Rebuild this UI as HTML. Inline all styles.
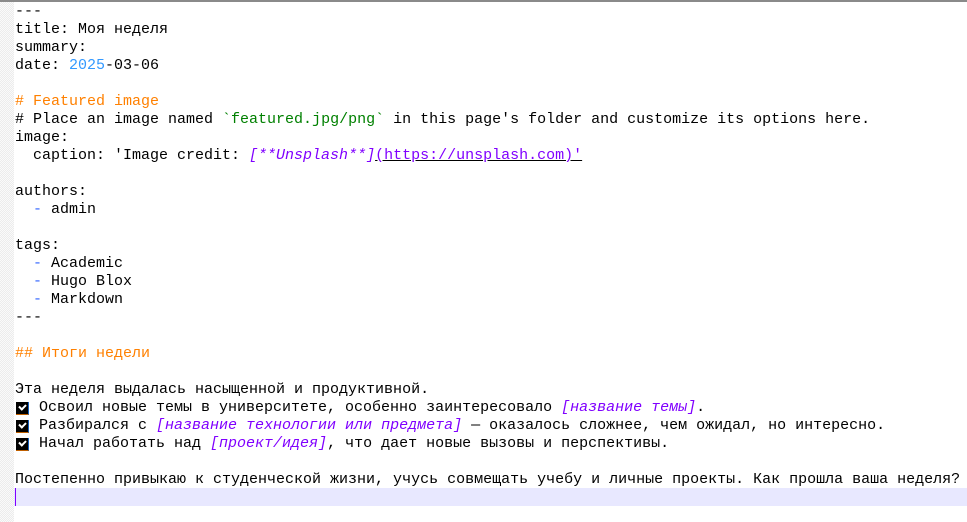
<!DOCTYPE html>
<html><head><meta charset="utf-8"><style>
html,body{margin:0;padding:0;width:967px;height:522px;overflow:hidden;background:#fff}
.top{position:absolute;left:0;top:0;width:967px;height:2px;background:#8a8a8a}
.gut{position:absolute;left:0;top:2px;width:14px;height:520px;background:repeating-conic-gradient(#ececec 0 25%,#fafafa 0 50%) 0 0/2px 2px}
.ed{position:absolute;left:15px;top:3px;font-family:"Liberation Mono","DejaVu Sans Mono",monospace;font-size:15px;line-height:18px;color:#000}
.l{height:18px;white-space:pre}
.o{color:#ff8000}
.b{color:#3399ff}
.g{color:#008000}
.p{color:#8000ff;font-style:italic}
.u{color:#8000ff;text-decoration:underline;text-decoration-color:#000}
.d{color:#3366ff}
.cur{position:absolute;left:14px;top:488px;width:953px;height:18px;background:#e8e8ff}
.caret{position:absolute;left:15px;top:488px;width:1px;height:18px;background:#8000ff}
.cb{display:inline-block;width:24px;height:18px;vertical-align:top;position:relative}
.cb i{position:absolute;left:1px;top:3px;width:12px;height:12px;background:#000;border-right:1px solid #1560bd;border-bottom:1px solid #c06000}
.cb i:after{content:"";position:absolute;left:3px;top:2px;width:5px;height:3px;border-left:2px solid #fff;border-bottom:2px solid #fff;transform:rotate(-45deg)}
</style></head><body>
<div class="top"></div>
<div class="gut"></div>
<div class="cur"></div>
<div class="caret"></div>
<div class="ed"><div class="l">---</div><div class="l">title: Моя неделя</div><div class="l">summary:</div><div class="l">date: <span class="b">2025</span>-03-06</div><div class="l"> </div><div class="l o"># Featured image</div><div class="l"># Place an image named <span class="g">`featured.jpg/png`</span> in this page's folder and customize its options here.</div><div class="l">image:</div><div class="l">  caption: 'Image credit: <span class="p">[**Unsplash**]</span><span class="u">(https://unsplash.com)'</span></div><div class="l"> </div><div class="l">authors:</div><div class="l">  <span class="d">-</span> admin</div><div class="l"> </div><div class="l">tags:</div><div class="l">  <span class="d">-</span> Academic</div><div class="l">  <span class="d">-</span> Hugo Blox</div><div class="l">  <span class="d">-</span> Markdown</div><div class="l">---</div><div class="l"> </div><div class="l o">## Итоги недели</div><div class="l"> </div><div class="l">Эта неделя выдалась насыщенной и продуктивной.</div><div class="l"><span class="cb"><i></i></span>Освоил новые темы в университете, особенно заинтересовало <span class="p">[название темы]</span>.</div><div class="l"><span class="cb"><i></i></span>Разбирался с <span class="p">[название технологии или предмета]</span> — оказалось сложнее, чем ожидал, но интересно.</div><div class="l"><span class="cb"><i></i></span>Начал работать над <span class="p">[проект/идея]</span>, что дает новые вызовы и перспективы.</div><div class="l"> </div><div class="l">Постепенно привыкаю к студенческой жизни, учусь совмещать учебу и личные проекты. Как прошла ваша неделя?</div></div>
</body></html>
